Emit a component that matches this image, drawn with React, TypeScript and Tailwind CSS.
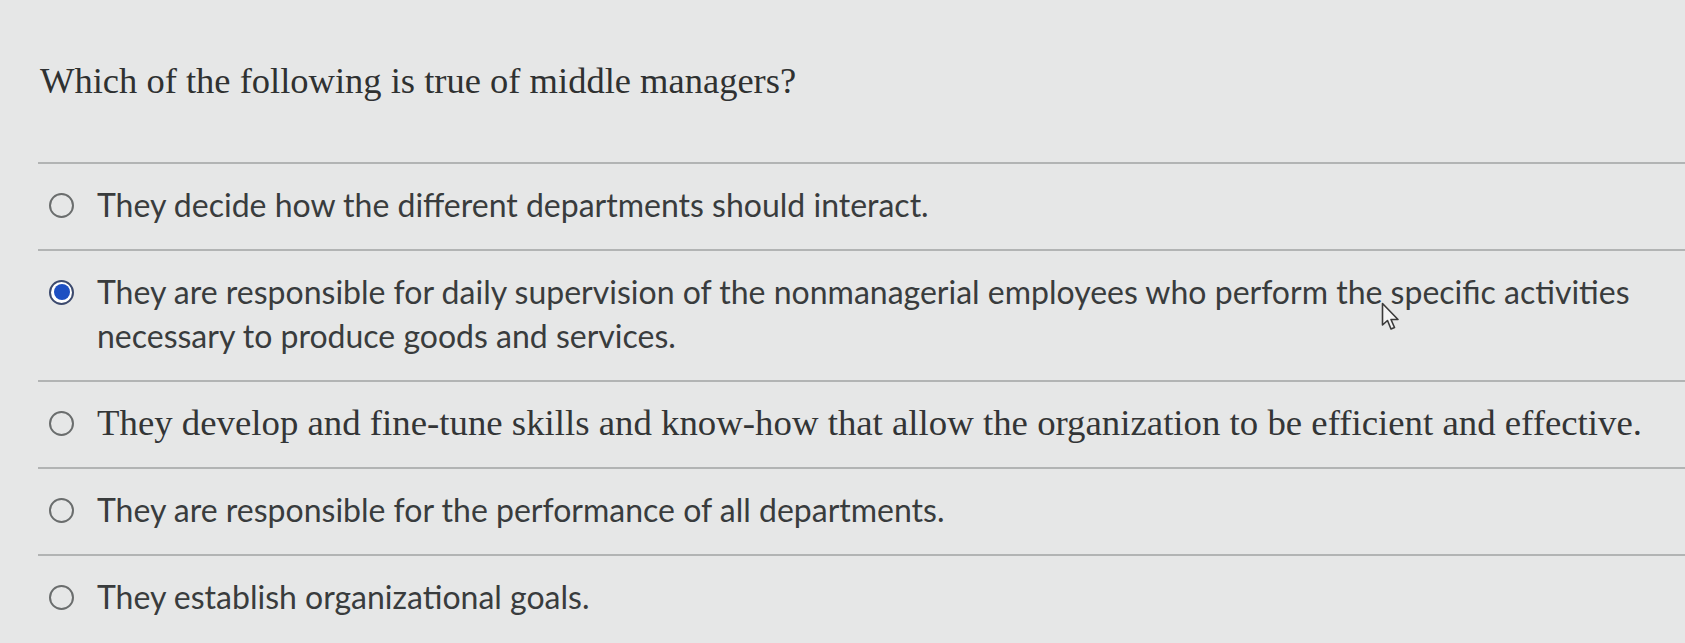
import { useState } from "react";

const options = [
  { id: "a", text: "They decide how the different departments should interact.", serif: false },
  {
    id: "b",
    text: "They are responsible for daily supervision of the nonmanagerial employees who perform the specific activities necessary to produce goods and services.",
    serif: false,
  },
  {
    id: "c",
    text: "They develop and fine-tune skills and know-how that allow the organization to be efficient and effective.",
    serif: true,
  },
  { id: "d", text: "They are responsible for the performance of all departments.", serif: false },
  { id: "e", text: "They establish organizational goals.", serif: false },
];

export default function App() {
  const [selected, setSelected] = useState("b");

  return (
    <div className="relative min-h-screen overflow-hidden bg-[#e6e7e7] text-[#393c3d]">
      <h1 className="pl-[40px] pt-[56px] pb-[56px] font-['Liberation_Serif',serif] text-[36.5px] leading-[50px] font-normal text-[#2f3131]">
        Which of the following is true of middle managers?
      </h1>

      <div className="ml-[38px]">
        {options.map((option) => (
          <label
            key={option.id}
            className="flex cursor-pointer items-start border-t-2 border-[#b2b4b4] pt-[19px] pb-[22px] pl-[11px] pr-[8px]"
            onClick={() => setSelected(option.id)}
          >
            <span className="flex h-[44px] w-[25px] shrink-0 items-center">
              <Radio checked={selected === option.id} />
            </span>
            <span
              className={`ml-[23px] leading-[44px] ${
                option.serif
                  ? "font-['Liberation_Serif',serif] text-[36.8px] text-[#333536]"
                  : "font-['Lato',sans-serif] text-[32px]"
              }`}
            >
              {option.text}
            </span>
          </label>
        ))}
      </div>

      <svg className="absolute left-[1381px] top-[302px]" width="22" height="30" viewBox="0 0 22 30">
        <path
          d="M1.5 1.5 L1.5 23 L6.5 18.5 L10 27 L13.5 25.5 L10 17.5 L17 17.5 Z"
          fill="#f4f4f4"
          stroke="#3a3a3a"
          strokeWidth="1.6"
          strokeLinejoin="round"
        />
      </svg>
    </div>
  );
}

function Radio({ checked }: { checked: boolean }) {
  if (checked) {
    return (
      <span className="flex h-[25px] w-[25px] items-center justify-center rounded-full border-2 border-[#3c4a6e] bg-white">
        <span className="h-[16px] w-[16px] rounded-full bg-[#1d4fc2]" />
      </span>
    );
  }
  return <span className="block h-[25px] w-[25px] rounded-full border-2 border-[#6a6d6d] bg-transparent" />;
}
